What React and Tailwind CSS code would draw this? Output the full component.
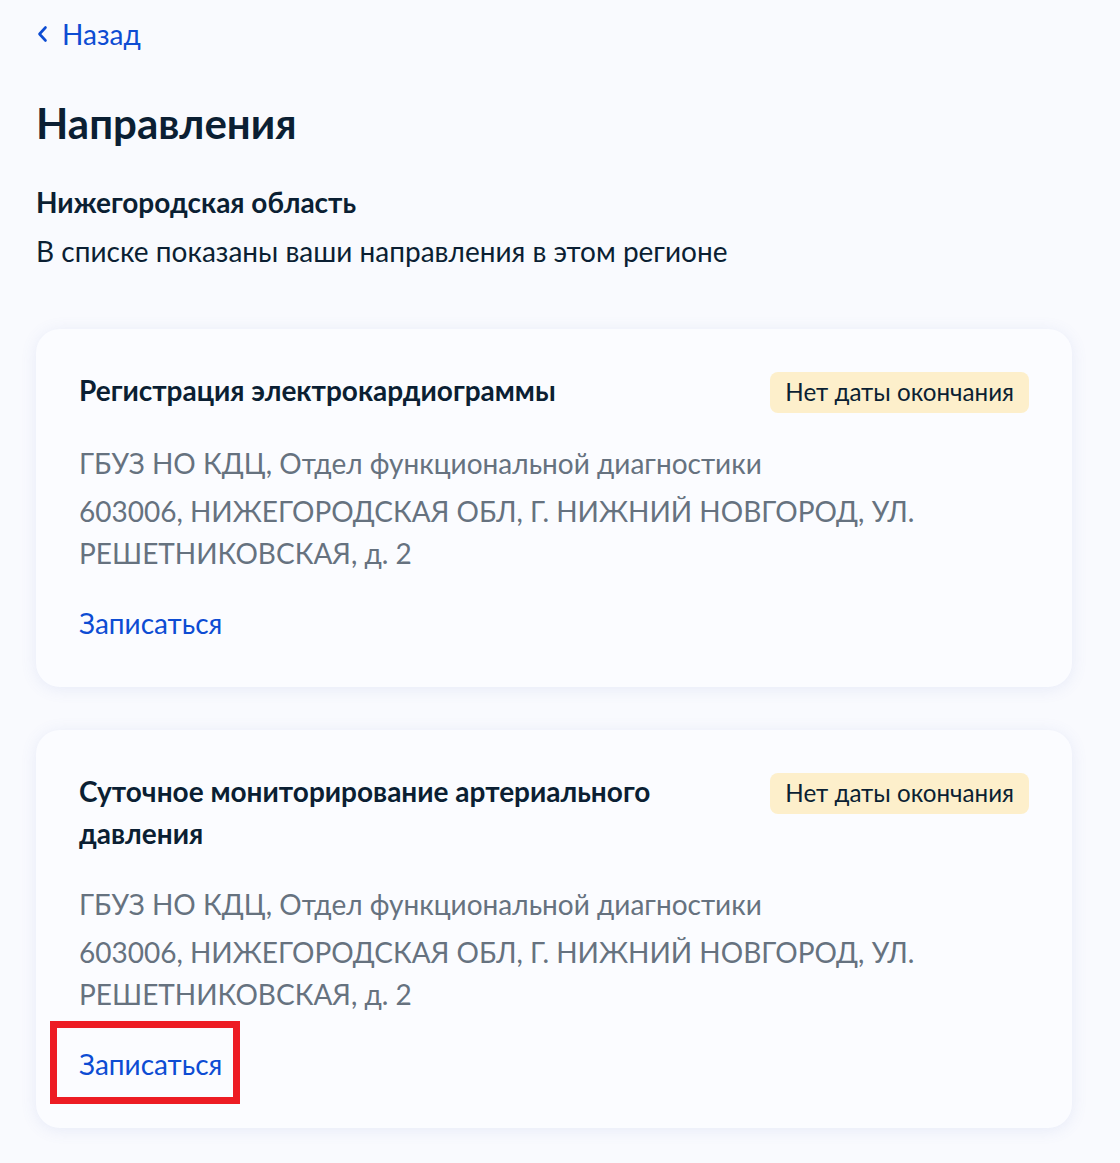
import React from "react";

function Card({ title, highlight }) {
  return (
    <div className="rounded-[24px] bg-[#fbfcff] shadow-[0_2px_16px_rgba(100,120,200,0.12)] px-[43px] pt-[40px] pb-[43px]">
      <div className="flex items-start justify-between gap-[40px]">
        <div className="text-[28px] leading-[42px] font-bold text-[#0b1f33] max-w-[620px]">{title}</div>
        <div className="shrink-0 mt-[3px] rounded-[8px] bg-[#fdefcb] px-[15px] h-[41px] flex items-center text-[24.2px] text-[#0b1f33]">Нет даты окончания</div>
      </div>
      <div className="mt-[29px] text-[28px] leading-[42px] text-[#66727f]">
        <div className="mb-[6px]">ГБУЗ НО КДЦ, Отдел функциональной диагностики</div>
        <div className="max-w-[880px]">603006, НИЖЕГОРОДСКАЯ ОБЛ, Г. НИЖНИЙ НОВГОРОД, УЛ. РЕШЕТНИКОВСКАЯ, д. 2</div>
      </div>
      <div className="mt-[28px] relative">
        <span className="text-[28px] leading-[42px] text-[#0d4cd3]">Записаться</span>
        {highlight && (
          <div className="absolute left-[-29px] top-[-22px] w-[190px] h-[83px] border-[7px] border-[#ed1c24]"></div>
        )}
      </div>
    </div>
  );
}

export default function App() {
  return (
    <div className="min-h-[1163px] bg-[#f9fafe] px-[36px] pt-[16px] pb-[34px]" style={{ fontFamily: "Lato, 'Noto Sans', sans-serif" }}>
      <div className="flex items-center gap-[14px] text-[#0d4cd3] text-[28px] leading-[36px]">
        <svg width="11" height="18" viewBox="0 0 11 18" className="ml-[1px]">
          <path d="M8.5 2.5 L2.5 9 L8.5 15.5" fill="none" stroke="#0d4cd3" strokeWidth="2.6" strokeLinecap="round" strokeLinejoin="round" />
        </svg>
        <span>Назад</span>
      </div>
      <h1 className="mt-[46px] text-[42px] leading-[50px] font-bold text-[#0b1f33]">Направления</h1>
      <div className="mt-[36px] text-[28px] leading-[36px] font-bold text-[#0b1f33]">Нижегородская область</div>
      <div className="mt-[13px] text-[28px] leading-[36px] text-[#0b1f33]">В списке показаны ваши направления в этом регионе</div>
      <div className="mt-[60px] flex flex-col gap-[43px] w-[1036px]">
        <Card title="Регистрация электрокардиограммы" />
        <Card title="Суточное мониторирование артериального давления" highlight />
      </div>
    </div>
  );
}
